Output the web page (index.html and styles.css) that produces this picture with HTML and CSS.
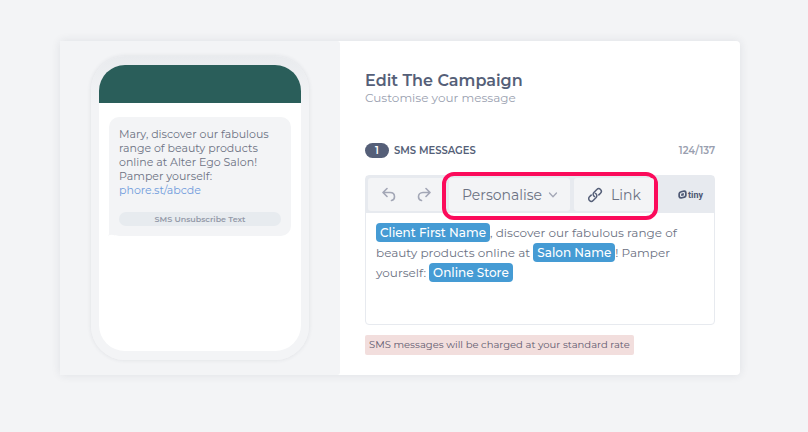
FILE: index.html
```html
<!DOCTYPE html>
<html lang="en">
<head>
<meta charset="utf-8">
<meta name="viewport" content="width=device-width, initial-scale=1">
<title>Edit The Campaign</title>
<link rel="stylesheet" href="styles.css">
</head>
<body>
<main class="card">
  <section class="preview" aria-label="Message preview">
    <div class="phone">
      <div class="screen">
        <div class="phone-header"></div>
        <div class="bubble">
          <svg class="bubble-tail" viewBox="0 0 12 12" aria-hidden="true"><path d="M1 0V9Q1 11 0 12Q3 9.600 7 11.500L12 6V0Z" fill="#f3f4f6"/></svg>
          <p class="bubble-text">Mary, discover our fabulous<br>range of beauty products<br>online at Alter Ego Salon!<br>Pamper yourself:<br><a href="#">phore.st/abcde</a></p>
          <div class="unsubscribe">SMS Unsubscribe Text</div>
        </div>
      </div>
    </div>
  </section>

  <section class="content">
    <h1 class="title">Edit The Campaign</h1>
    <p class="subtitle">Customise your message</p>

    <div class="counter">
      <span class="count">1</span>
      <span class="counter-label" id="message-label">SMS MESSAGES</span>
      <span class="counter-chars">124/137</span>
    </div>

    <div class="editor">
      <div class="toolbar" role="toolbar" aria-label="Formatting">
        <div class="group history">
          <button class="tool" type="button" aria-label="Undo">
            <svg width="14" height="16" viewBox="0 0 14 16" fill="none" stroke="#a3a7b6" stroke-width="1.600" stroke-linecap="round" stroke-linejoin="round"><path d="M5 1.500L1 5.500L5 9.500M1.500 5.500H8C11 5.500 12.500 7.500 12.500 9.700C12.500 11.500 11.500 13 9.500 13.500"/></svg>
          </button>
          <button class="tool" type="button" aria-label="Redo">
            <svg width="14" height="16" viewBox="0 0 14 16" fill="none" stroke="#a3a7b6" stroke-width="1.600" stroke-linecap="round" stroke-linejoin="round"><path d="M9 1.500L13 5.500L9 9.500M12.500 5.500H6C3 5.500 1.500 7.500 1.500 9.700C1.500 11.500 2.500 13 4.500 13.500"/></svg>
          </button>
        </div>
        <div class="highlighted">
          <button class="group action personalise" type="button">Personalise
            <svg width="10" height="6" viewBox="0 0 10 6" fill="none" stroke="#a3a7b6" stroke-width="1.300" stroke-linecap="round" stroke-linejoin="round" aria-hidden="true"><path d="M1.500 1L5 4.700L8.500 1"/></svg>
          </button>
          <button class="group action link" type="button">
            <svg width="16" height="16" viewBox="0 0 16 16" fill="none" stroke="#555f78" stroke-width="1.500" stroke-linecap="round" stroke-linejoin="round" aria-hidden="true"><g transform="rotate(-45 8 8)"><path d="M10.800 10.600H13.200a2.600 2.600 0 0 0 0-5.200H9a2.600 2.600 0 0 0-2.400 3.400M5.200 5.400H2.800a2.600 2.600 0 0 0 0 5.200H7a2.600 2.600 0 0 0 2.400-3.400"/></g></svg>
            Link
          </button>
        </div>
        <a class="tiny" href="#">
          <svg width="9" height="9" viewBox="0 0 9 9" aria-hidden="true"><path fill="#4e5874" fill-rule="evenodd" d="M3 1L6 .300Q8.500 0 8.700 2.500V5.500Q8.500 7.600 6.500 8.100L3.200 8.800Q.600 9 .300 6.500V3.700Q.400 1.500 3 1ZM3.500 2.400Q2 2.700 2 4V6Q2.100 7.300 3.500 7L5.600 6.500Q7 6.200 7 5V3Q6.900 1.700 5.500 2ZM3.200 3.700L5.800 3.100V5.500L3.200 6.100Z"/></svg>
          tiny
        </a>
      </div>
      <div class="message" contenteditable="true" spellcheck="false" role="textbox" aria-multiline="true" aria-labelledby="message-label"><span class="token">Client First Name</span>, discover our fabulous range of<br>beauty products online at <span class="token">Salon Name</span>! Pamper<br>yourself: <span class="token">Online Store</span></div>
    </div>

    <p class="notice">SMS messages will be charged at your standard rate</p>
  </section>
</main>
</body>
</html>
```
FILE: styles.css
```css
* {
  box-sizing: border-box;
}

body {
  margin: 0;
  padding: 41px 68px 41px 60px;
  background: #f3f4f6;
  color: #6c7283;
  font-family: Montserrat, Inter, sans-serif;
  font-size: 12px;
}

h1,
p {
  margin: 0;
}

a {
  text-decoration: none;
}

button {
  margin: 0;
  padding: 0;
  border: 0;
  background: none;
  color: inherit;
  font: inherit;
  cursor: pointer;
}

svg {
  display: block;
  flex: none;
}

.card {
  display: grid;
  grid-template-columns: 280px 1fr;
  background: #fff;
  border-radius: 4px;
  box-shadow: 0 0 10px rgba(40, 50, 70, 0.1);
}

.preview {
  padding: 15px 31px;
  background: #f3f4f6;
  border-radius: 0 3px 3px 0;
}

.phone {
  height: 100%;
  padding: 9px 8px;
  border-radius: 34px;
  background: linear-gradient(#e9ebee, #f3f4f6 50px);
  box-shadow: 0 0 4px rgba(40, 50, 70, 0.1);
}

.screen {
  height: 100%;
  overflow: hidden;
  border-radius: 26px;
  background: #fff;
}

.phone-header {
  height: 38px;
  background: #2a5e5a;
}

.bubble {
  position: relative;
  margin: 14px 10px;
  padding: 10px;
  border-radius: 10px;
  background: #f3f4f6;
}

.bubble-tail {
  position: absolute;
  left: -1px;
  bottom: 0;
  width: 12px;
  height: 12px;
}

.bubble-text {
  font-size: 11px;
  line-height: 14px;
}

.bubble-text a {
  color: #6f9bdc;
}

.unsubscribe {
  position: relative;
  margin-top: 15px;
  border-radius: 7px;
  background: #e7ebef;
  color: #949aa9;
  font-size: 8px;
  font-weight: 600;
  line-height: 14px;
  text-align: center;
}

.content {
  padding: 29px 25px 20px;
}

.title {
  color: #555f78;
  font-size: 16px;
  font-weight: 600;
  line-height: 22px;
}

.subtitle {
  color: #9a9fb0;
  line-height: 12px;
}

.counter {
  display: flex;
  align-items: center;
  gap: 5px;
  margin-top: 38px;
  color: #555f78;
  font-size: 10px;
  font-weight: 600;
  line-height: 17px;
}

.count {
  width: 24px;
  height: 15px;
  border-radius: 8px;
  background: #555f78;
  color: #fff;
  line-height: 15px;
  text-align: center;
}

.counter-chars {
  margin-left: auto;
  color: #9a9fb0;
}

.editor {
  margin-top: 16px;
  border: 1px solid #e7eaef;
  border-radius: 4px;
}

.toolbar {
  display: flex;
  align-items: center;
  height: 37px;
  padding-left: 2px;
  background: #e7eaef;
}

.group {
  height: 33px;
  border-radius: 3px;
  background: #f3f4f6;
}

.history {
  display: flex;
  align-items: center;
  width: 78px;
  gap: 21px;
  padding-left: 14px;
}

.highlighted {
  display: flex;
  align-items: center;
  gap: 4px;
  flex: none;
  height: 48px;
  margin: 3px 0 0 -4px;
  padding: 0 0 3px 3px;
  border: 4px solid #fb0b5b;
  border-radius: 12px;
}

.action {
  display: flex;
  align-items: center;
  color: #6c7283;
  font-size: 14px;
}

.personalise {
  width: 121px;
  gap: 6px;
  padding-left: 13px;
}

.link {
  width: 80px;
  gap: 8px;
  padding-left: 13px;
}

.tiny {
  display: flex;
  align-items: center;
  gap: 1px;
  margin: 0 11px 0 auto;
  color: #4e5874;
  font-family: Roboto, sans-serif;
  font-size: 9px;
  font-weight: 700;
}

.message {
  min-height: 111px;
  padding: 10px;
  line-height: 20px;
  outline: none;
}

.token {
  padding: 2px 4px;
  border-radius: 4px;
  background: #459bd4;
  color: #fff;
  font-weight: 500;
}

.notice {
  width: fit-content;
  margin-top: 10px;
  padding: 2px 4px;
  border-radius: 2px;
  background: #f2dedd;
  color: #625b70;
  font-size: 10px;
  line-height: 16px;
}
```
